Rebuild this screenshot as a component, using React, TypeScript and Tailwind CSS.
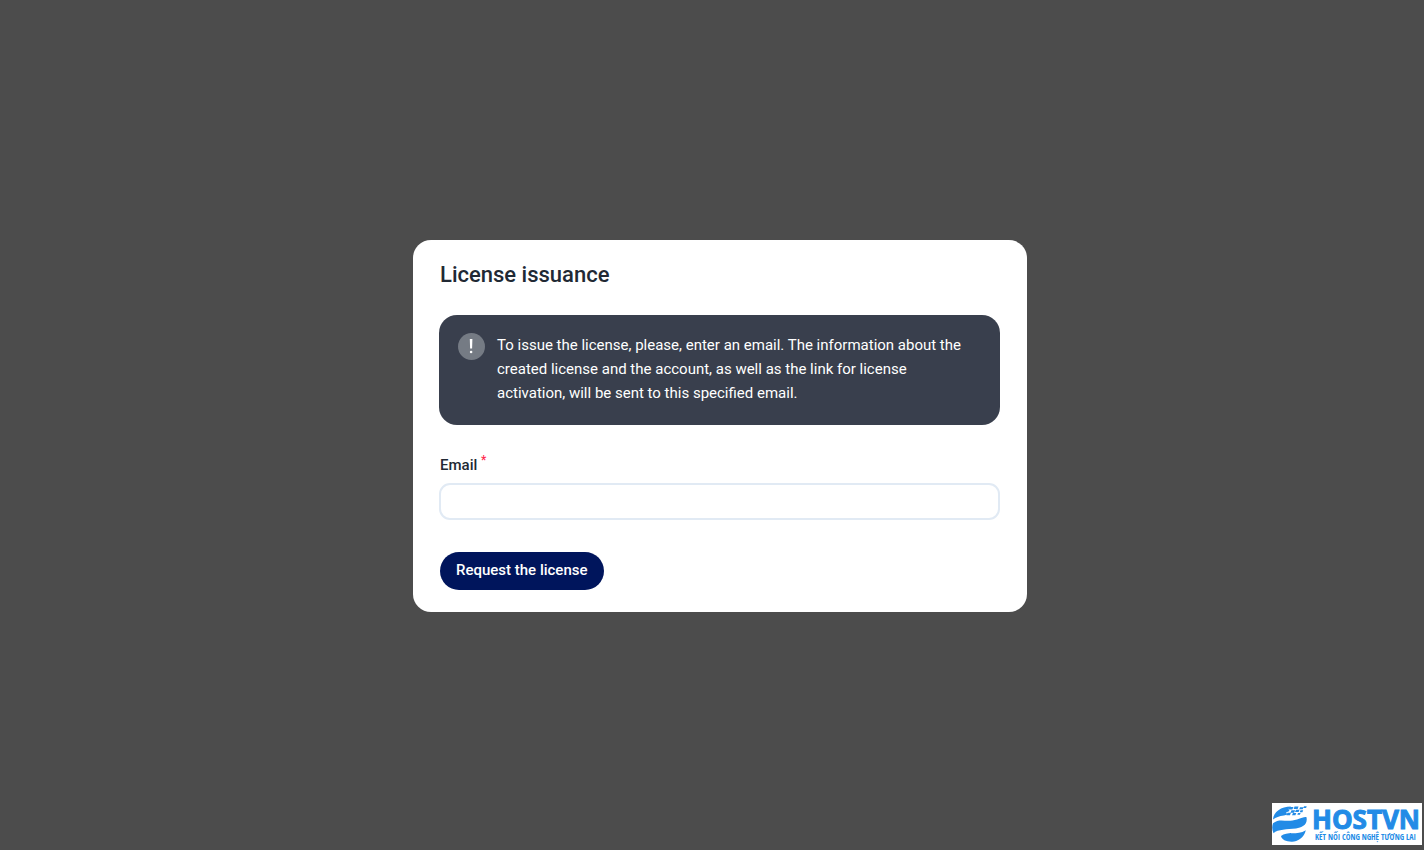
import { useState } from "react";

function InfoIcon() {
  return (
    <svg className="size-[27px] shrink-0" viewBox="0 0 27 27" aria-hidden="true">
      <circle cx="13.5" cy="13.5" r="13.5" fill="#757b84" />
      <path d="M11.8 6h2.6l-.3 9.6h-2z" fill="#fff" />
      <circle cx="13.1" cy="19" r="1.3" fill="#fff" />
    </svg>
  );
}

function HostLogo() {
  return (
    <svg className="h-[42px] w-[150px] bg-white" viewBox="0 0 150 42" role="img" aria-label="HOSTVN">
      <g fill="#228be6">
        <path d="M1 16.500C1.500 9 9 3.600 19 3.600L16.500 6 17.500 8 14 9.500 15.500 11.500 12 12.500C7 13 4 14.500 1 16.500Z" />
        <path d="M17.500 4h4l-1.200 2.600h-4zM22.500 3.500h4l-.8 2.400h-4zM19.500 7.300h3.600l-1 2.400h-3.600zM24 6.700h3.500l-.9 2.400H23zM28 4.200h3.500l-.8 2h-3.400zM32 3.300h2.700l-.6 1.600h-2.700zM28.500 7.300h2.700l-.8 2h-2.600zM15.500 9.700h3.500l-1.100 2.600h-3.500zM21 10h3.300l-.9 2.300h-3.400zM26 10h2.600l-.7 1.800h-2.600z" />
        <path d="M1 20.300C8 14.500 14 20 25 16.500 30 15 33 13.500 34.500 14.300 36 22 30 24.500 24 25.500 15 26.500 6 26 1.500 30.200 0 27-.2 23.500 1 20.300Z" />
        <path d="M9 33C15 27.500 25 33 33.800 27.200 32 35 25 39 19.500 38.700 14 38.700 9.500 36.500 9 33Z" />
      </g>
      <text
        x="40"
        y="26"
        fill="#228be6"
        stroke="#228be6"
        strokeWidth="1"
        fontFamily="'Open Sans', sans-serif"
        fontSize="26"
        fontWeight="700"
      >
        HOSTVN
      </text>
      <text x="43" y="37" fill="#228be6" fontFamily="'Open Sans Condensed', 'Open Sans', sans-serif" fontSize="8" fontWeight="700">
        KẾT NỐI CÔNG NGHỆ TƯƠNG LAI
      </text>
    </svg>
  );
}

export default function App() {
  const [email, setEmail] = useState("");

  return (
    <div className="bg-white pr-[3px] font-['Roboto',sans-serif] text-[#212934]">
      <div className="flex min-h-screen flex-col bg-[#4c4c4c]">
        <main className="flex flex-1 items-center justify-center pt-12 pl-4">
          <form
            className="w-full max-w-[614px] rounded-[18px] bg-white pt-[21px] pr-[27px] pb-[22px] pl-[26px]"
            onSubmit={(e) => e.preventDefault()}
          >
            <h1 className="pl-px text-[22px] leading-7 font-medium">License issuance</h1>

            <div className="mt-[26px] flex gap-3 rounded-[18px] bg-[#393f4d] pt-[18px] pr-6 pb-5 pl-[19px] text-white">
              <InfoIcon />
              <p className="text-[15px] leading-6">
                To issue the license, please, enter an email. The information about the created license and the
                account, as well as the link for license activation, will be sent to this specified email.
              </p>
            </div>

            <label htmlFor="email" className="mt-7 block pl-px text-[15px] leading-6 font-medium">
              Email <sup className="text-[12px] text-[#ff2d4f]">*</sup>
            </label>
            <input
              id="email"
              type="email"
              required
              value={email}
              onChange={(e) => setEmail(e.target.value)}
              className="mt-1.5 block h-[37px] w-full rounded-[11px] border-2 border-[#e1eaf4] px-3 text-[15px] outline-none"
            />

            <button
              type="submit"
              className="mt-8 ml-px h-[38px] rounded-full bg-[#00155c] px-4 text-[15px] font-medium text-white"
            >
              Request the license
            </button>
          </form>
        </main>

        <footer className="flex justify-end pr-0.5 pb-[5px]">
          <HostLogo />
        </footer>
      </div>
    </div>
  );
}
